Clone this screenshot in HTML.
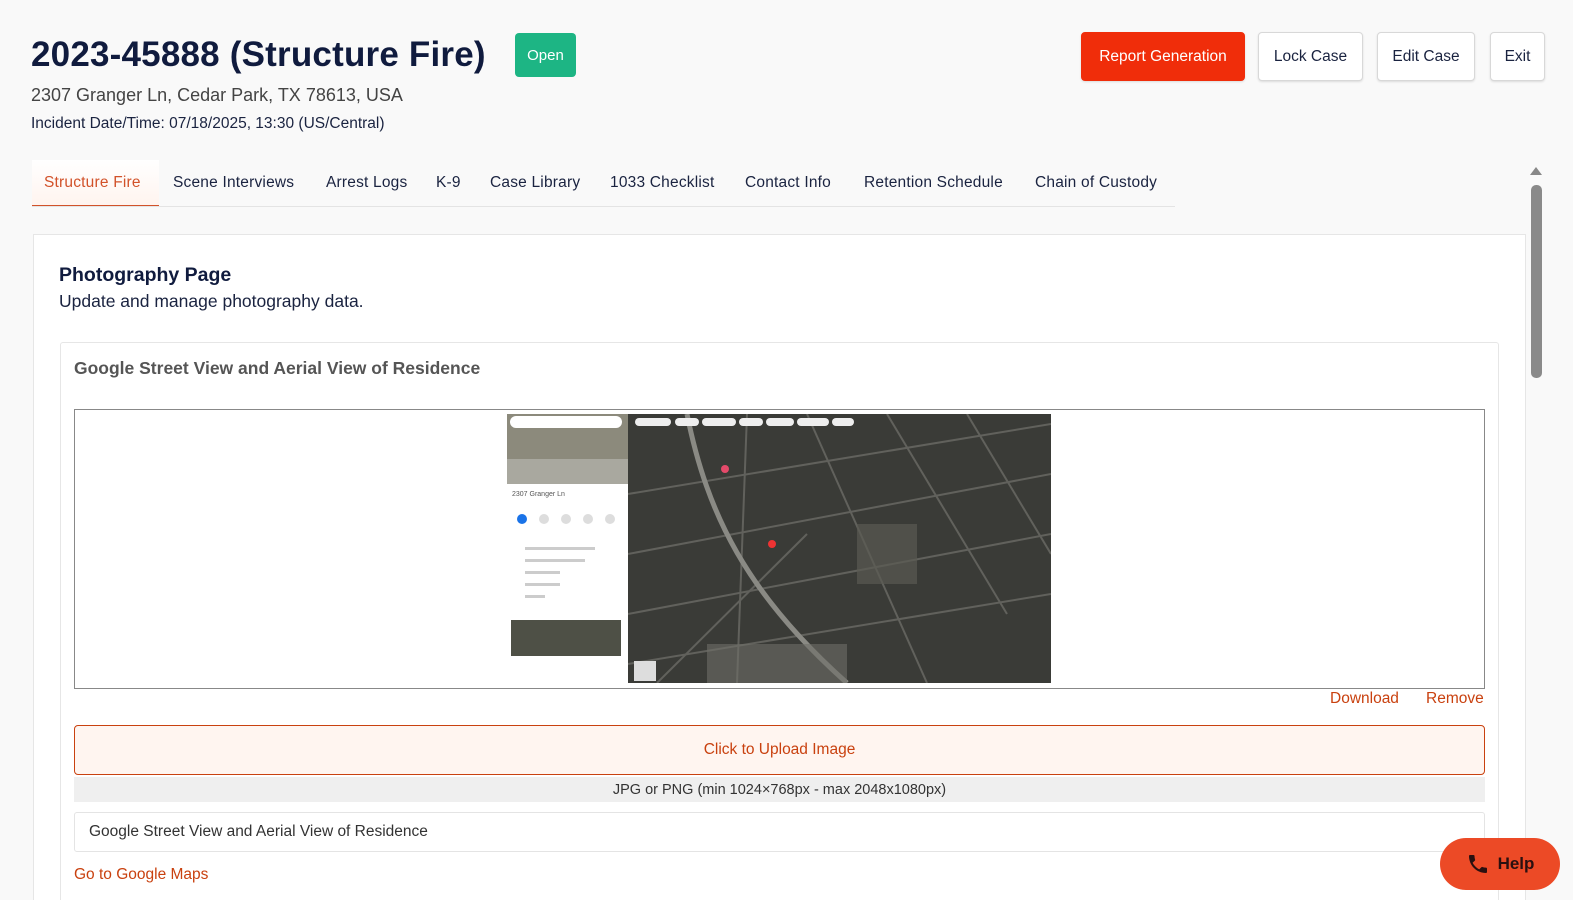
<!DOCTYPE html>
<html style="overflow:hidden;width:1573px;height:900px"><head><meta charset="utf-8"><style>
*{box-sizing:border-box;margin:0;padding:0}
body{width:1573px;height:900px;overflow:hidden;background:#f9f9f9;font-family:"Liberation Sans",sans-serif;color:#0f1b3d;position:relative}
.a{position:absolute;white-space:nowrap}
.btn{position:absolute;top:32px;height:49px;border:1px solid #d8d8d8;border-radius:4px;background:#fff;font-size:15.5px;display:flex;align-items:center;justify-content:center;box-shadow:0 1px 2px rgba(0,0,0,.12);color:#1a2340}
.tab{position:absolute;top:174px;font-size:15.5px;color:#1a2340;letter-spacing:.2px}
</style></head><body>
<div class="a" style="left:31px;top:35px;font-size:35px;font-weight:bold;color:#101b3e;letter-spacing:0.2px">2023-45888 (Structure Fire)</div>
<div class="a" style="left:515px;top:33px;width:61px;height:44px;background:#1db584;border-radius:4px;color:#fff;font-size:15px;display:flex;align-items:center;justify-content:center">Open</div>
<div class="a" style="left:31px;top:85px;font-size:18px;color:#444">2307 Granger Ln, Cedar Park, TX 78613, USA</div>
<div class="a" style="left:31px;top:115px;font-size:15.5px;color:#1a2340">Incident Date/Time: 07/18/2025, 13:30 (US/Central)</div>

<div class="btn" style="left:1081px;width:164px;background:#f02d0a;border-color:#f02d0a;color:#fff">Report Generation</div>
<div class="btn" style="left:1258px;width:105px">Lock Case</div>
<div class="btn" style="left:1377px;width:98px">Edit Case</div>
<div class="btn" style="left:1490px;width:55px">Exit</div>

<div class="a" style="left:32px;top:160px;width:127px;height:47px;background:linear-gradient(#fff,#fff4ef);border-bottom:2px solid #d2522a"></div>
<div class="a" style="left:32px;top:206px;width:1143px;height:1px;background:#e4e4e4"></div>
<div class="tab" style="left:44px;color:#d2522a">Structure Fire</div>
<div class="tab" style="left:173px">Scene Interviews</div>
<div class="tab" style="left:326px">Arrest Logs</div>
<div class="tab" style="left:436px">K-9</div>
<div class="tab" style="left:490px">Case Library</div>
<div class="tab" style="left:610px">1033 Checklist</div>
<div class="tab" style="left:745px">Contact Info</div>
<div class="tab" style="left:864px">Retention Schedule</div>
<div class="tab" style="left:1035px">Chain of Custody</div>

<div class="a" style="left:1530px;top:167px;width:0;height:0;border-left:6px solid transparent;border-right:6px solid transparent;border-bottom:8px solid #888"></div>
<div class="a" style="left:1531px;top:185px;width:11px;height:193px;background:#8a8a8a;border-radius:5px"></div>

<div class="a" style="left:33px;top:234px;width:1493px;height:666px;background:#fff;border:1px solid #e6e6e6;border-bottom:none"></div>
<div class="a" style="left:59px;top:264px;font-size:19.5px;font-weight:bold;color:#101b3e">Photography Page</div>
<div class="a" style="left:59px;top:291px;font-size:17.5px;color:#1a2340">Update and manage photography data.</div>

<div class="a" style="left:60px;top:342px;width:1439px;height:558px;border:1px solid #e6e6e6;border-bottom:none;border-radius:3px 3px 0 0"></div>
<div class="a" style="left:74px;top:358px;font-size:17.5px;font-weight:bold;color:#555">Google Street View and Aerial View of Residence</div>

<div class="a" style="left:74px;top:409px;width:1411px;height:280px;border:1px solid #888;background:#fff"></div>
<svg class="a" style="left:507px;top:414px" width="544" height="269" viewBox="0 0 544 269">
<rect width="544" height="269" fill="#3a3b37"/>
<g stroke="#6b6b66" stroke-width="2" fill="none" opacity=".8">
<path d="M240 0 L230 269"/><path d="M121 80 L544 10"/><path d="M121 140 L544 60"/>
<path d="M121 200 L544 120"/><path d="M300 0 L420 269"/><path d="M380 0 L500 200"/>
<path d="M121 250 L544 180"/><path d="M460 0 L544 140"/><path d="M150 269 L300 120"/>
</g>
<path d="M180 0 C 200 100, 240 180, 340 269" stroke="#8a8a84" stroke-width="5" fill="none"/>
<rect x="350" y="110" width="60" height="60" fill="#5a5a52" opacity=".7"/>
<rect x="200" y="230" width="140" height="39" fill="#6e6e68" opacity=".6"/>
<circle cx="265" cy="130" r="4" fill="#e33"/><circle cx="218" cy="55" r="4" fill="#e44a6a"/>
<rect x="0" y="0" width="121" height="269" fill="#fff"/>
<rect x="0" y="0" width="121" height="70" fill="#8c8a7c"/>
<rect x="0" y="45" width="121" height="25" fill="#a9a89f"/>
<rect x="3" y="2" width="112" height="12" rx="6" fill="#fff"/>
<text x="5" y="82" font-size="7" fill="#555" font-family="Liberation Sans">2307 Granger Ln</text>
<g fill="#ddd"><circle cx="15" cy="105" r="5" fill="#1a73e8"/><circle cx="37" cy="105" r="5"/><circle cx="59" cy="105" r="5"/><circle cx="81" cy="105" r="5"/><circle cx="103" cy="105" r="5"/></g>
<g fill="#ccc"><rect x="18" y="133" width="70" height="3"/><rect x="18" y="145" width="60" height="3"/><rect x="18" y="157" width="35" height="3"/><rect x="18" y="169" width="35" height="3"/><rect x="18" y="181" width="20" height="3"/></g>
<rect x="4" y="206" width="110" height="36" fill="#4e5046"/>
<rect x="127" y="247" width="22" height="20" fill="#ddd"/>
<g fill="#eee"><rect x="128" y="4" width="36" height="8" rx="4"/><rect x="168" y="4" width="24" height="8" rx="4"/><rect x="195" y="4" width="34" height="8" rx="4"/><rect x="232" y="4" width="24" height="8" rx="4"/><rect x="259" y="4" width="28" height="8" rx="4"/><rect x="290" y="4" width="32" height="8" rx="4"/><rect x="325" y="4" width="22" height="8" rx="4"/></g>
</svg>

<div class="a" style="left:1330px;top:690px;font-size:15.5px;color:#c9410f">Download</div>
<div class="a" style="left:1426px;top:690px;font-size:15.5px;color:#c9410f">Remove</div>

<div class="a" style="left:74px;top:725px;width:1411px;height:50px;background:#fff5f0;border:1px solid #c9410f;border-radius:4px;display:flex;align-items:center;justify-content:center;font-size:15.5px;color:#c9410f">Click to Upload Image</div>
<div class="a" style="left:74px;top:777px;width:1411px;height:25px;background:#efefef;display:flex;align-items:center;justify-content:center;font-size:14.5px;color:#333">JPG or PNG (min 1024×768px - max 2048x1080px)</div>
<div class="a" style="left:74px;top:812px;width:1411px;height:40px;border:1px solid #e4e4e4;border-radius:3px;background:#fff;font-size:15.5px;color:#333;padding:10px 14px">Google Street View and Aerial View of Residence</div>
<div class="a" style="left:74px;top:866px;font-size:15.5px;color:#c9410f">Go to Google Maps</div>

<div class="a" style="left:1440px;top:838px;width:120px;height:52px;background:#ec4a26;border-radius:26px;display:flex;align-items:center;justify-content:center;gap:8px;font-size:17px;font-weight:bold;color:#2a1010">
<svg width="24" height="24" viewBox="0 0 24 24"><path fill="#2a1010" d="M6.6 10.8c1.4 2.8 3.8 5.1 6.6 6.6l2.2-2.2c.3-.3.7-.4 1-.2 1.1.4 2.3.6 3.6.6.6 0 1 .4 1 1V20c0 .6-.4 1-1 1C10.6 21 3 13.4 3 4c0-.6.4-1 1-1h3.5c.6 0 1 .4 1 1 0 1.3.2 2.5.6 3.6.1.3 0 .7-.2 1z"/></svg>Help</div>
</body></html>
